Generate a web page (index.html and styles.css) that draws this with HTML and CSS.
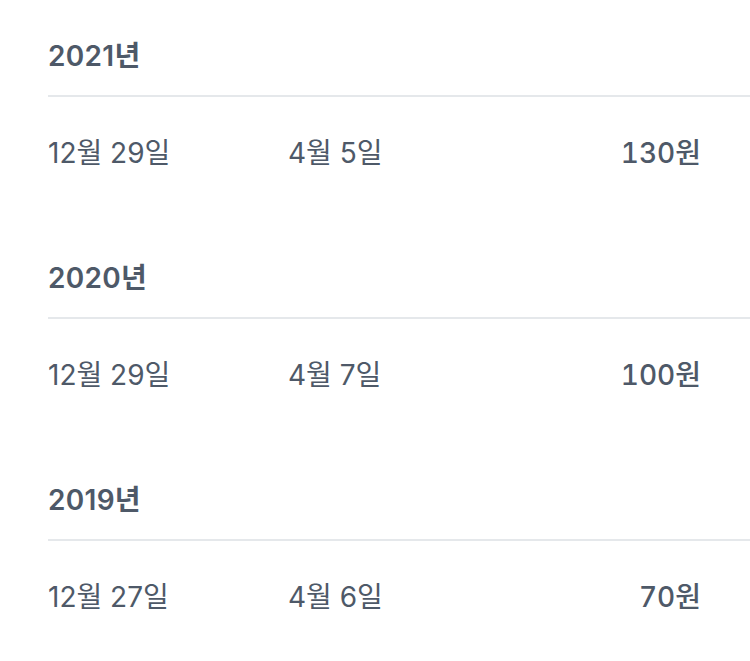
FILE: index.html
```html
<!DOCTYPE html>
<html lang="ko">
<head>
<meta charset="utf-8">
<link rel="stylesheet" href="styles.css">
</head>
<body>
<div class="list">
  <section class="year">
    <h2 class="year-title">2021년</h2>
    <div class="row">
      <span class="col date">12월 29일</span>
      <span class="col pay">4월 5일</span>
      <span class="col amount">130원</span>
    </div>
  </section>
  <section class="year">
    <h2 class="year-title">2020년</h2>
    <div class="row">
      <span class="col date">12월 29일</span>
      <span class="col pay">4월 7일</span>
      <span class="col amount">100원</span>
    </div>
  </section>
  <section class="year">
    <h2 class="year-title">2019년</h2>
    <div class="row">
      <span class="col date">12월 27일</span>
      <span class="col pay">4월 6일</span>
      <span class="col amount">70원</span>
    </div>
  </section>
</div>
</body>
</html>
```
FILE: styles.css
```css
html, body {
  margin: 0;
  padding: 0;
  background: #ffffff;
}
body {
  font-family: Inter, "Noto Sans CJK KR", sans-serif;
  color: #4e5968;
}
.list {
  padding-left: 48px;
  padding-top: 35px;
}
.year {
  height: 222px;
}
.year:last-child {
  height: auto;
}
.year-title {
  margin: 0;
  font-size: 28px;
  font-weight: 600;
  letter-spacing: 0.3px;
  line-height: 42px;
  padding-bottom: 18px;
  border-bottom: 2px solid #e5e8eb;
}
.row {
  display: flex;
  align-items: center;
  padding-right: 49px;
  padding-top: 36px;
  font-size: 28px;
  line-height: 40px;
}
.date {
  width: 240px;
}
.pay {
  flex: 1;
}
.amount {
  font-weight: 500;
  text-align: right;
  font-variant-numeric: tabular-nums;
}
```
